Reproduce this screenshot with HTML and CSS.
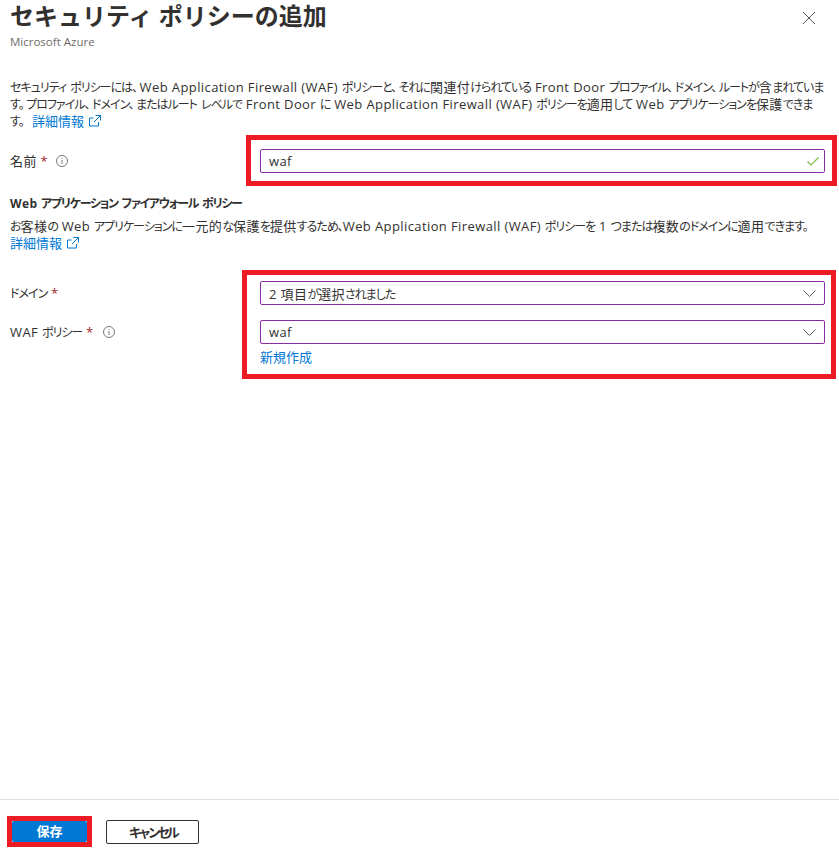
FILE: index.html
```html
<!DOCTYPE html>
<html lang="ja">
<head>
  <meta charset="UTF-8">
  <meta name="viewport" content="width=device-width, initial-scale=1.0">
  <title>セキュリティ ポリシーの追加</title>
  <link rel="stylesheet" href="styles.css">
</head>
<body>
  <div class="panel">
    <header class="panel-header">
      <div>
        <h1>セキュリティ ポリシーの追加</h1>
        <p class="subtitle">Microsoft Azure</p>
      </div>
      <button type="button" class="close-btn" aria-label="閉じる">
        <svg width="12" height="12" viewBox="0 0 12 12"><path d="M0 0l12 12M12 0L0 12" fill="none" stroke="#555" stroke-width="1"/></svg>
      </button>
    </header>

    <main class="panel-body">
      <p class="intro"><span class="kn">セキュリティ ポリシーには<span class="pn">、</span></span>Web Application Firewall (WAF) <span class="kn">ポリシーと<span class="pn">、</span>それに</span>関連付<span class="kn">けられている</span> Front Door <span class="kn">プロファイル<span class="pn">、</span>ドメイン<span class="pn">、</span>ルートが</span>含<span class="kn">まれていま</span><br><span class="kn">す<span class="pn">。</span>プロファイル<span class="pn">、</span>ドメイン<span class="pn">、</span>またはルート レベルで</span> Front Door <span class="kn">に</span> Web Application Firewall (WAF) <span class="kn">ポリシーを</span>適用<span class="kn">して</span> Web <span class="kn">アプリケーションを</span>保護<span class="kn">できま</span><br><span class="kn">す<span class="pn">。</span></span> <a href="#" class="link">詳細情報 <svg class="ext-icon" width="12" height="12" viewBox="0 0 12 12"><path d="M9.500 7v4h-9V3h4M6.500 .5h5v5M11.500 .5L5 7" fill="none" stroke="#0078d4"/></svg></a></p>

      <div class="form-row row-name">
        <label class="form-label">名前 <span class="req">*</span>
          <svg class="info-icon" width="12" height="12" viewBox="0 0 12 12"><circle cx="6" cy="6" r="5.500" fill="none" stroke="#777"/><path d="M6 5v4M6 3v1" stroke="#777"/></svg>
        </label>
        <div class="field">
          <span>waf</span>
          <svg class="check-icon" width="12" height="9" viewBox="0 0 12 9"><path d="M.5 4.500l3.500 3.500L11.500 .5" fill="none" stroke="#7fba45" stroke-width="1.200"/></svg>
        </div>
      </div>

      <h2>Web <span class="kn">アプリケーション ファイアウォール ポリシー</span></h2>
      <p class="section-text"><span class="kn">お</span>客様<span class="kn">の</span> Web <span class="kn">アプリケーションに</span>一元的<span class="kn">な</span>保護<span class="kn">を</span>提供<span class="kn">するため、</span>Web Application Firewall (WAF) <span class="kn">ポリシーを</span> 1 <span class="kn">つまたは</span>複数<span class="kn">のドメインに</span>適用<span class="kn">できます。</span><br><a href="#" class="link">詳細情報 <svg class="ext-icon" width="12" height="12" viewBox="0 0 12 12"><path d="M9.500 7v4h-9V3h4M6.500 .5h5v5M11.500 .5L5 7" fill="none" stroke="#0078d4"/></svg></a></p>

      <div class="form-row row-domain">
        <label class="form-label"><span class="kn">ドメイン</span> <span class="req">*</span></label>
        <div class="field">
          <span>2 項目<span class="kn">が</span>選択<span class="kn">されました</span></span>
          <svg width="13" height="7" viewBox="0 0 13 7"><path d="M.5 .5l6 6 6-6" fill="none" stroke="#555"/></svg>
        </div>
      </div>
      <div class="form-row row-waf">
        <label class="form-label">WAF <span class="kn">ポリシー</span> <span class="req">*</span>
          <svg class="info-icon" width="12" height="12" viewBox="0 0 12 12"><circle cx="6" cy="6" r="5.500" fill="none" stroke="#777"/><path d="M6 5v4M6 3v1" stroke="#777"/></svg>
        </label>
        <div>
          <div class="field">
            <span>waf</span>
            <svg width="13" height="7" viewBox="0 0 13 7"><path d="M.5 .5l6 6 6-6" fill="none" stroke="#555"/></svg>
          </div>
          <a href="#" class="link create-link">新規作成</a>
        </div>
      </div>
    </main>

    <footer class="panel-footer">
      <button type="button" class="btn btn-primary">保存</button>
      <button type="button" class="btn btn-secondary">キャンセル</button>
    </footer>

    <div class="highlight hl-name"></div>
    <div class="highlight hl-fields"></div>
    <div class="highlight hl-save"></div>
  </div>
</body>
</html>
```

FILE: styles.css
```css
* {
  box-sizing: border-box;
}
body {
  margin: 0;
  font-family: "Open Sans", "Noto Sans CJK JP", sans-serif;
  font-size: 13px;
  letter-spacing: .4px;
  font-feature-settings: "palt";
  color: #323130;
  background-color: #fff;
}
p, h1, h2 {
  margin: 0;
}
.kn {
  font-size: 12px;
  letter-spacing: -1px;
  word-spacing: 2px;
}
.pn {
  margin-right: 2.500px;
}
.panel {
  position: relative;
  display: flex;
  flex-direction: column;
  height: 854px;
  overflow: hidden;
}
.panel-header {
  display: flex;
  justify-content: space-between;
  padding: 0 24px 0 10px;
  height: 79px;
}
h1 {
  font-size: 24px;
  line-height: 32px;
  font-weight: 700;
  letter-spacing: 0;
  font-feature-settings: normal;
}
.subtitle {
  font-size: 11.500px;
  line-height: 20px;
  letter-spacing: 0;
  color: #6f6d6b;
}
.close-btn {
  width: 12px;
  height: 12px;
  padding: 0;
  margin-top: 12px;
  border: none;
  background: none;
  display: flex;
}
.panel-body {
  flex: 1;
  padding: 0 14px 0 10px;
}
.intro {
  line-height: 17px;
  white-space: nowrap;
}
.intro .link {
  margin-left: 2px;
}
.link {
  color: #0078d4;
  text-decoration: none;
  letter-spacing: 0;
}
.ext-icon {
  margin-left: 2px;
  vertical-align: -1px;
}
.form-row {
  display: grid;
  grid-template-columns: 250px 1fr;
  align-items: start;
}
.row-name {
  margin-top: 19px;
}
.row-domain {
  margin-top: 29px;
}
.row-waf {
  margin-top: 15px;
}
.form-label {
  height: 24px;
  line-height: 24px;
}
.req {
  color: #a4262c;
}
.info-icon {
  margin-left: 6px;
  vertical-align: -1px;
}
.row-name .info-icon {
  margin-left: 4px;
}
.field {
  display: flex;
  align-items: center;
  justify-content: space-between;
  height: 24px;
  padding: 0 8px 0 8px;
  border: 1px solid #8a2da5;
  border-radius: 2px;
}
.check-icon {
  margin-right: -3px;
}
.create-link {
  display: block;
  margin-top: 5px;
  line-height: 17px;
}
h2 {
  margin-top: 22px;
  font-size: 12px;
  line-height: 17px;
  font-weight: 700;
}
h2 .kn {
  letter-spacing: -1.300px;
}
.section-text {
  margin-top: 6px;
  line-height: 17px;
  white-space: nowrap;
}
.panel-footer {
  display: flex;
  gap: 19px;
  height: 55px;
  padding: 20px 0 0 12px;
  border-top: 1px solid #e1dfdd;
}
.btn {
  height: 24px;
  font-family: inherit;
  font-size: 13px;
  font-weight: 700;
  line-height: 1;
  border-radius: 2px;
  padding: 0;
}
.btn-primary {
  width: 75px;
  height: 21px;
  margin-top: 1px;
  color: #fff;
  background-color: #0078d4;
  border: none;
}
.btn-secondary {
  width: 93px;
  color: #323130;
  background-color: #fff;
  border: 1px solid #323130;
  letter-spacing: -3.500px;
}
.highlight {
  position: absolute;
  border: 5px solid #ed1c24;
}
.hl-name {
  left: 246px;
  top: 135px;
  width: 591px;
  height: 51px;
}
.hl-fields {
  left: 242px;
  top: 270px;
  width: 594px;
  height: 109px;
}
.hl-save {
  left: 7px;
  top: 816px;
  width: 85px;
  height: 31px;
}
```
